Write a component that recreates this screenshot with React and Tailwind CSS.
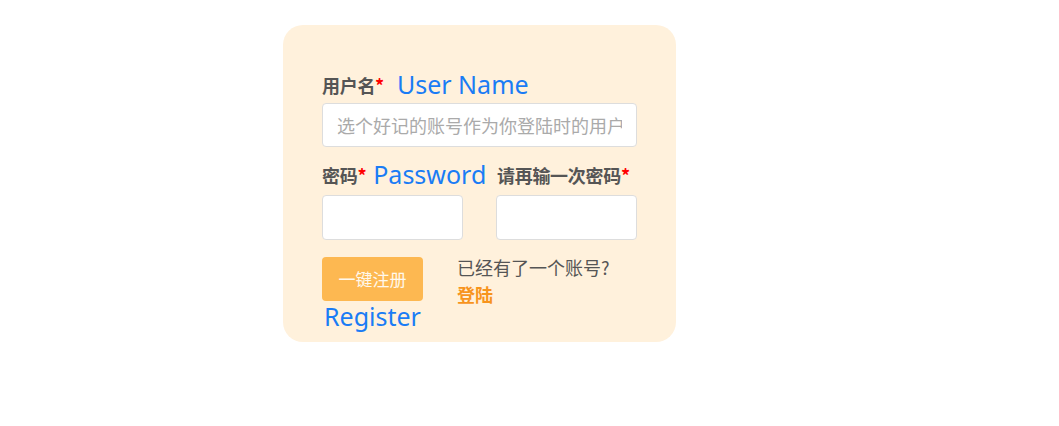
export default function App() {
  const cjk = { fontFamily: '"Noto Sans CJK SC", "Noto Sans", sans-serif' };
  return (
    <div className="min-h-screen bg-white" style={cjk}>
      <div className="pt-[25px] pl-[283px]">
        <div className="w-[393px] h-[317px] bg-[#fff1dc] rounded-[20px] pt-[45px] px-[39px]">
          {/* username */}
          <div className="flex items-center h-[30px] gap-[13px] whitespace-nowrap">
            <span className="text-[18px] font-bold text-[#555] tracking-[-0.3px]">
              用户名<span className="text-[#f00]">*</span>
            </span>
            <span className="text-[25px] text-[#1a7cf5] font-['Noto_Sans',sans-serif]">User Name</span>
          </div>
          <input
            placeholder="选个好记的账号作为你登陆时的用户名"
            className="mt-[3px] w-[315px] h-[44px] bg-white border border-[#ddd] rounded-[4px] px-[14px] text-[18px] text-[#555] placeholder:text-[#aaa] outline-none"
          />

          {/* passwords */}
          <div className="mt-[13px] flex gap-[33px]">
            <div className="w-[141px]">
              <div className="flex items-center h-[30px] gap-[7px] whitespace-nowrap">
                <span className="text-[18px] font-bold text-[#555] tracking-[-0.3px]">
                  密码<span className="text-[#f00]">*</span>
                </span>
                <span className="text-[25px] text-[#1a7cf5] font-['Noto_Sans',sans-serif]">Password</span>
              </div>
              <input
                type="password"
                className="mt-[5px] w-[141px] h-[45px] bg-white border border-[#ddd] rounded-[4px] outline-none"
              />
            </div>
            <div className="w-[141px]">
              <div className="flex items-center h-[30px] pl-[1px] whitespace-nowrap">
                <span className="text-[18px] font-bold text-[#555] tracking-[-0.3px]">
                  请再输一次密码<span className="text-[#f00]">*</span>
                </span>
              </div>
              <input
                type="password"
                className="mt-[5px] w-[141px] h-[45px] bg-white border border-[#ddd] rounded-[4px] outline-none"
              />
            </div>
          </div>

          {/* actions */}
          <div className="mt-[17px] flex">
            <div className="w-[135px]">
              <button className="w-[101px] h-[44px] bg-[#fdb851] rounded-[4px] text-[17px] text-[#fff8ec]">
                一键注册
              </button>
              <div className="w-[101px] text-center text-[25px] leading-[30px] text-[#1a7cf5] font-['Noto_Sans',sans-serif]">
                Register
              </div>
            </div>
            <div className="-mt-[3px] text-[18px] leading-[27px] whitespace-nowrap">
              <div className="text-[#555]">已经有了一个账号?</div>
              <a className="font-bold text-[#f7941d]">登陆</a>
            </div>
          </div>
        </div>
      </div>
    </div>
  );
}
